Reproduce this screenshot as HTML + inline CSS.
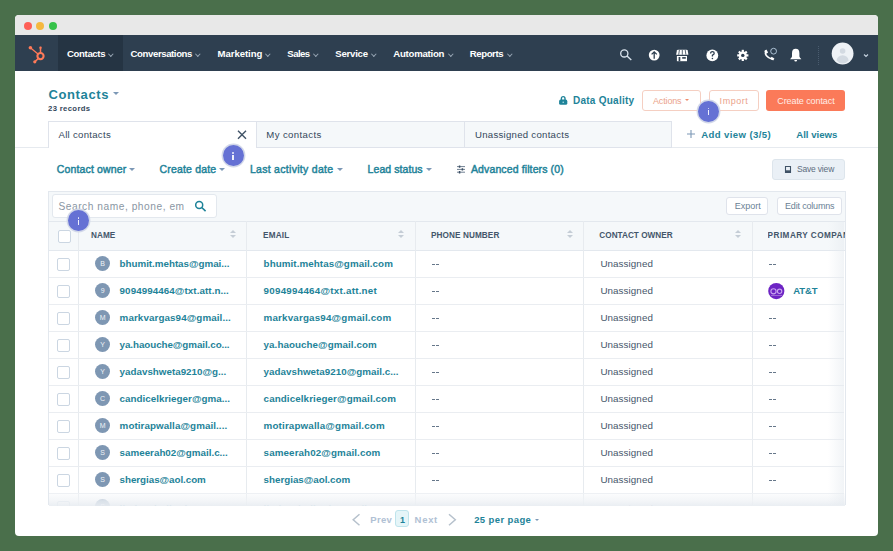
<!DOCTYPE html>
<html><head><meta charset="utf-8">
<style>
*{box-sizing:border-box;margin:0;padding:0}
html,body{width:893px;height:551px;overflow:hidden;background:#4a6f4b;font-family:"Liberation Sans",sans-serif;position:relative}
.a{position:absolute}
.t{position:absolute;white-space:nowrap;line-height:1}
.dot{position:absolute;top:21.8px;width:8px;height:8px;border-radius:50%}
.car{position:absolute;width:3.6px;height:3.6px;border-right:1px solid #95a3b2;border-bottom:1px solid #95a3b2;transform:rotate(45deg)}
.tri{position:absolute;width:0;height:0;border-left:3px solid transparent;border-right:3px solid transparent;border-top:3px solid #7c98b6}
.vl{position:absolute;width:1px;background:#e7ebef}
.hl{position:absolute;height:1px;background:#eaedf1}
.cb{position:absolute;width:13px;height:13px;border:1px solid #cbd6e2;border-radius:2px;background:#fff}
.av{position:absolute;width:15.6px;height:15.6px;border-radius:50%;background:#7e97b3;color:#eef2f6;font-size:7px;line-height:15.6px;text-align:center;font-weight:normal}
.dash{position:absolute;width:7px;height:6px}
.dash:before,.dash:after{content:"";position:absolute;top:2.5px;width:3px;height:1px;background:#66778a}
.dash:before{left:0}.dash:after{left:4px}
.badge{position:absolute;width:21px;height:21px;border-radius:50%;background:#6571d4;box-shadow:0 0 0 1.4px rgba(208,214,232,.95)}
.badge:before{content:"";position:absolute;left:9.75px;top:7.1px;width:1.6px;height:1.6px;background:#eef0fb;border-radius:1px}
.badge:after{content:"";position:absolute;left:9.8px;top:9.7px;width:1.5px;height:4.9px;background:#eef0fb}
.sort{position:absolute;width:7px;height:12px}
.sort:before{content:"";position:absolute;left:1px;top:0px;border-left:3px solid transparent;border-right:3px solid transparent;border-bottom:3px solid #c5cdd6}
.sort:after{content:"";position:absolute;left:1px;top:5px;border-left:3px solid transparent;border-right:3px solid transparent;border-top:3.5px solid #c5cdd6}
.btn{position:absolute;background:#fff;border:1px solid #dfe3eb;border-radius:3px}
</style></head>
<body>
<!-- window -->
<div class="a" style="left:15px;top:15px;width:863px;height:521px;background:#fff;border-radius:4px"></div>
<div class="a" style="left:15px;top:15px;width:863px;height:20px;background:#e8e8e8;border-radius:4px 4px 0 0"></div>
<div class="dot" style="left:24px;background:#fe5f57"></div>
<div class="dot" style="left:36.2px;background:#f5b83f"></div>
<div class="dot" style="left:48.8px;background:#36c24a"></div>

<!-- NAV -->
<div class="a" style="left:15px;top:35px;width:863px;height:36px;background:#2e3f50"></div>
<div class="a" style="left:58px;top:35px;width:64.5px;height:36px;background:#253443"></div>
<svg class="a" style="left:15px;top:35px" width="50" height="36" viewBox="0 0 50 36">
  <g fill="none" stroke="#ff7a59">
    <circle cx="25.5" cy="21.1" r="3.1" stroke-width="2.1"/>
    <line x1="25.5" y1="18" x2="25.5" y2="12.8" stroke-width="1.5"/>
    <line x1="23.3" y1="19.2" x2="15.4" y2="12.8" stroke-width="1.3"/>
    <line x1="23.4" y1="23.4" x2="19.8" y2="26.8" stroke-width="1.5"/>
  </g>
  <rect x="24.3" y="11.6" width="2.4" height="2.2" rx="0.8" fill="#ff7a59"/>
  <circle cx="15.4" cy="12.8" r="1.8" fill="#ff7a59"/>
  <circle cx="19.8" cy="26.8" r="1.6" fill="#ff7a59"/>
</svg>
<div class="car" style="left:108.7px;top:52px"></div>
<div class="car" style="left:196.2px;top:52px"></div>
<div class="car" style="left:265.9px;top:52px"></div>
<div class="car" style="left:313.9px;top:52px"></div>
<div class="car" style="left:372.2px;top:52px"></div>
<div class="car" style="left:449.2px;top:52px"></div>
<div class="car" style="left:508.2px;top:52px"></div>
<!-- nav icons -->
<svg class="a" style="left:610px;top:40px" width="220" height="28" viewBox="0 0 220 28">
  <!-- search -->
  <circle cx="14.3" cy="13.4" r="3.6" fill="none" stroke="#dbe4ee" stroke-width="1.3"/>
  <line x1="17" y1="16.1" x2="21.3" y2="20" stroke="#dbe4ee" stroke-width="1.4"/>
  <!-- upload -->
  <circle cx="44.2" cy="15.1" r="5.4" fill="#fff"/>
  <path d="M44.2 18.8 V12 M41.6 14.4 L44.2 11.8 L46.8 14.4" fill="none" stroke="#2e3f50" stroke-width="1.3"/>
  <!-- marketplace -->
  <path d="M66.9 10.6 Q67.1 9.8 68 9.8 H76.6 Q77.5 9.8 77.7 10.6 L78.4 14.8 H66.1 Z" fill="#fff"/>
  <path d="M69.4 10 L68.7 14.7 M72.3 10 V14.7 M75.2 10 L75.9 14.7" stroke="#2e3f50" stroke-width="0.8"/>
  <rect x="66.9" y="16" width="10.1" height="5.2" fill="#fff"/>
  <rect x="68.6" y="17" width="1.7" height="4.2" fill="#2e3f50"/>
  <rect x="72.2" y="17.1" width="3.6" height="1.6" fill="#2e3f50"/>
  <!-- help -->
  <circle cx="102.3" cy="15.4" r="5.9" fill="#fff"/>
  <path d="M100.6 13.6 Q100.6 11.6 102.4 11.6 Q104.2 11.6 104.2 13.3 Q104.2 14.5 102.4 15.2 V16.5" fill="none" stroke="#2e3f50" stroke-width="1.3"/>
  <circle cx="102.4" cy="18.5" r="0.8" fill="#2e3f50"/>
  <!-- gear -->
  <g transform="translate(132.8 15.4)">
    <circle r="3.9" fill="#fff"/>
    <g fill="#fff">
      <rect x="-1.1" y="-5.6" width="2.2" height="11.2"/>
      <rect x="-1.1" y="-5.6" width="2.2" height="11.2" transform="rotate(45)"/>
      <rect x="-1.1" y="-5.6" width="2.2" height="11.2" transform="rotate(90)"/>
      <rect x="-1.1" y="-5.6" width="2.2" height="11.2" transform="rotate(135)"/>
    </g>
    <circle r="1.7" fill="#2e3f50"/>
  </g>
  <!-- phone -->
  <path d="M155.6 11.2 Q154.2 16.6 162.4 19.2" fill="none" stroke="#fff" stroke-width="1.7" stroke-linecap="round"/>
  <path d="M154.3 10.9 L156.4 9.6 L158.1 12.6 L156.3 13.8 Z" fill="#fff"/>
  <path d="M160.3 18.6 L161.6 16.8 L164.4 18.6 L163.2 20.6 Z" fill="#fff"/>
  <circle cx="163.6" cy="11.2" r="2.9" fill="none" stroke="#b8cde0" stroke-width="0.9"/>
  <!-- bell -->
  <path d="M185.7 8.8 Q182 8.8 182 13.2 V16.6 Q181.6 18 180.2 19 V19.3 H191.2 V19 Q189.8 18 189.4 16.6 V13.2 Q189.4 8.8 185.7 8.8 Z" fill="#fff"/>
  <path d="M184.3 20 H187.1 Q187.1 21.5 185.7 21.5 Q184.3 21.5 184.3 20 Z" fill="#fff"/>
  <!-- divider -->
  <line x1="208.5" y1="6" x2="208.5" y2="25" stroke="#4a5c6f" stroke-width="1" stroke-dasharray="1 1"/>
</svg>
<svg class="a" style="left:826px;top:38px" width="50" height="32" viewBox="0 0 50 32">
  <circle cx="16.6" cy="15.5" r="10.9" fill="#eef2f6"/>
  <circle cx="16.6" cy="13" r="2.8" fill="#d3dae2"/>
  <path d="M10.5 22.5 Q11.5 17.5 16.6 17.3 Q21.7 17.5 22.7 22.5 Q20 25.5 16.6 25.6 Q13.2 25.5 10.5 22.5 Z" fill="#d3dae2"/>
  <path d="M38 16.5 L40 18.4 L42 16.5" fill="none" stroke="#c5d2df" stroke-width="1.1"/>
</svg>

<!-- HEADER -->
<div class="tri" style="left:112.6px;top:91.6px;border-left-width:3.8px;border-right-width:3.8px;border-top-width:3.7px"></div>
<svg class="a" style="left:558px;top:95px" width="11" height="11" viewBox="0 0 11 11">
  <path d="M3.4 5 V3.4 Q3.4 1.6 5.2 1.6 Q7 1.6 7 3.4 V5" fill="none" stroke="#1e8399" stroke-width="1.4"/>
  <rect x="1.1" y="4.6" width="8.2" height="5.2" rx="1.6" fill="#1e8399"/>
  <circle cx="5.2" cy="7.2" r="0.75" fill="#bfe6ee"/>
</svg>
<div class="btn" style="left:642px;top:90px;width:59px;height:21px;border-color:#f5cfc2"></div>
<div class="tri" style="left:684.8px;top:99.2px;border-top-color:#ef8c6c;border-left-width:2.2px;border-right-width:2.2px;border-top-width:2.6px"></div>
<div class="btn" style="left:709px;top:90px;width:49.5px;height:21px;border-color:#f5cfc2"></div>
<div class="a" style="left:766.2px;top:90px;width:78.8px;height:20.6px;background:#fb7a59;border-radius:3px"></div>

<!-- TABS -->
<div class="hl" style="left:15px;top:147px;width:863px;background:#e6eaef"></div>
<div class="a" style="left:48px;top:121px;width:208.5px;height:27px;background:#fff;border:1px solid #dfe3eb;border-bottom:none"></div>
<div class="a" style="left:256px;top:121px;width:416px;height:27px;background:#f5f8fa;border:1px solid #dfe3eb"></div>
<div class="vl" style="left:464px;top:121px;height:27px;background:#dfe3eb"></div>
<svg class="a" style="left:236px;top:129px" width="12" height="12" viewBox="0 0 12 12">
  <path d="M2 1.8 L10 9.8 M10 1.8 L2 9.8" stroke="#3f5266" stroke-width="1.4"/>
</svg>
<svg class="a" style="left:686px;top:129px" width="10" height="10" viewBox="0 0 10 10">
  <path d="M5 1 V9 M1 5 H9" stroke="#7c98b6" stroke-width="1.1"/>
</svg>

<!-- FILTERS -->
<div class="tri" style="left:129px;top:167.8px"></div>
<div class="tri" style="left:218.6px;top:167.8px"></div>
<div class="tri" style="left:336.6px;top:167.8px"></div>
<div class="tri" style="left:426px;top:167.8px"></div>
<svg class="a" style="left:456px;top:164px" width="10" height="10" viewBox="0 0 10 10">
  <path d="M1 2.6 H9 M1 5.4 H9 M1 8.2 H9" stroke="#5d7085" stroke-width="0.9"/>
  <path d="M3.6 1.4 V3.8 M6.4 4.2 V6.6 M3.6 7 V9.4" stroke="#3d5065" stroke-width="1.5"/>
</svg>
<div class="a" style="left:772px;top:159px;width:73.2px;height:21px;background:#eaf0f6;border:1px solid #dde5ec;border-radius:3px"></div>
<svg class="a" style="left:784px;top:165px" width="8" height="8" viewBox="0 0 8 8">
  <path d="M1.5 1.5 H6.5 V7.4 H1.5 Z" fill="none" stroke="#3f5266" stroke-width="1.1"/>
  <rect x="1.2" y="5.3" width="5.6" height="1.8" fill="#3f5266"/>
</svg>

<!-- TABLE -->
<div class="a" style="left:48px;top:191px;width:798px;height:314px;border:1px solid #e3e8ee;border-bottom:none;background:#fff"></div>
<div class="a" style="left:49px;top:192px;width:796px;height:29px;background:#f5f8fa"></div>
<div class="btn" style="left:51.6px;top:193.5px;width:165px;height:24.5px;border-color:#e3e8ee"></div>
<svg class="a" style="left:193px;top:199px" width="14" height="14" viewBox="0 0 14 14">
  <circle cx="6.2" cy="5.9" r="3.5" fill="none" stroke="#1e8399" stroke-width="1.5"/>
  <line x1="8.7" y1="8.5" x2="12.6" y2="12.2" stroke="#1e8399" stroke-width="1.6"/>
</svg>
<div class="btn" style="left:725.6px;top:197.4px;width:42.7px;height:17.2px"></div>
<div class="btn" style="left:776.7px;top:197.4px;width:65.5px;height:17.2px"></div>
<div class="a" style="left:49px;top:221px;width:796px;height:30px;background:#f5f8fa;border-top:1px solid #e3e8ee;border-bottom:1px solid #e3e8ee"></div>
<div class="cb" style="left:57.5px;top:229.5px"></div>
<div class="vl" style="left:78px;top:221px;height:284px"></div>
<div class="vl" style="left:246.3px;top:221px;height:284px"></div>
<div class="vl" style="left:415.3px;top:221px;height:284px"></div>
<div class="vl" style="left:583px;top:221px;height:284px"></div>
<div class="vl" style="left:751.8px;top:221px;height:284px"></div>
<div class="sort" style="left:228.6px;top:230.4px"></div>
<div class="sort" style="left:397.1px;top:230.4px"></div>
<div class="sort" style="left:565.5px;top:230.4px"></div>
<div class="sort" style="left:733.9px;top:230.4px"></div>
<div class="hl" style="left:49px;top:276.5px;width:795px"></div>
<div class="cb" style="left:57.3px;top:258px"></div>
<div class="av" style="left:94.8px;top:255.7px">B</div>
<div class="dash" style="left:431.8px;top:261.3px"></div>
<div class="dash" style="left:769px;top:261.3px"></div>
<div class="hl" style="left:49px;top:303.5px;width:795px"></div>
<div class="cb" style="left:57.3px;top:285px"></div>
<div class="av" style="left:94.8px;top:282.7px">9</div>
<div class="dash" style="left:431.8px;top:288.3px"></div>
<div class="hl" style="left:49px;top:330.5px;width:795px"></div>
<div class="cb" style="left:57.3px;top:312px"></div>
<div class="av" style="left:94.8px;top:309.7px">M</div>
<div class="dash" style="left:431.8px;top:315.3px"></div>
<div class="dash" style="left:769px;top:315.3px"></div>
<div class="hl" style="left:49px;top:357.5px;width:795px"></div>
<div class="cb" style="left:57.3px;top:339px"></div>
<div class="av" style="left:94.8px;top:336.7px">Y</div>
<div class="dash" style="left:431.8px;top:342.3px"></div>
<div class="dash" style="left:769px;top:342.3px"></div>
<div class="hl" style="left:49px;top:384.5px;width:795px"></div>
<div class="cb" style="left:57.3px;top:366px"></div>
<div class="av" style="left:94.8px;top:363.7px">Y</div>
<div class="dash" style="left:431.8px;top:369.3px"></div>
<div class="dash" style="left:769px;top:369.3px"></div>
<div class="hl" style="left:49px;top:411.5px;width:795px"></div>
<div class="cb" style="left:57.3px;top:393px"></div>
<div class="av" style="left:94.8px;top:390.7px">C</div>
<div class="dash" style="left:431.8px;top:396.3px"></div>
<div class="dash" style="left:769px;top:396.3px"></div>
<div class="hl" style="left:49px;top:438.5px;width:795px"></div>
<div class="cb" style="left:57.3px;top:420px"></div>
<div class="av" style="left:94.8px;top:417.7px">M</div>
<div class="dash" style="left:431.8px;top:423.3px"></div>
<div class="dash" style="left:769px;top:423.3px"></div>
<div class="hl" style="left:49px;top:465.5px;width:795px"></div>
<div class="cb" style="left:57.3px;top:447px"></div>
<div class="av" style="left:94.8px;top:444.7px">S</div>
<div class="dash" style="left:431.8px;top:450.3px"></div>
<div class="dash" style="left:769px;top:450.3px"></div>
<div class="hl" style="left:49px;top:492.5px;width:795px"></div>
<div class="cb" style="left:57.3px;top:474px"></div>
<div class="av" style="left:94.8px;top:471.7px">S</div>
<div class="dash" style="left:431.8px;top:477.3px"></div>
<div class="dash" style="left:769px;top:477.3px"></div>
<div class="hl" style="left:49px;top:519.5px;width:795px"></div>
<div class="cb" style="left:57.3px;top:501px"></div>
<div class="av" style="left:94.8px;top:498.7px">S</div>
<div class="dash" style="left:431.8px;top:504.3px"></div>
<div class="dash" style="left:769px;top:504.3px"></div>
<div class="t" style="left:119.6px;top:503.80px;font-size:9.8px;font-weight:bold;color:#1e8399;letter-spacing:0.1px">lindseyhollard@gma...</div>
<div class="t" style="left:263.6px;top:503.80px;font-size:9.8px;font-weight:bold;color:#1e8399;letter-spacing:0.1px">lindseyhollard@gmail.com</div>
<div class="t" style="left:600.4px;top:504.10px;font-size:9.8px;color:#33475b;letter-spacing:0.08px">Unassigned</div>
<!-- AT&T logo -->
<svg class="a" style="left:767px;top:282px" width="19" height="19" viewBox="0 0 19 19">
  <circle cx="9.3" cy="9.1" r="8.1" fill="#6d24c4"/>
  <circle cx="6.5" cy="9.3" r="2.6" fill="none" stroke="#c9a4ef" stroke-width="1.1"/>
  <circle cx="12.6" cy="9.3" r="2.2" fill="none" stroke="#c9a4ef" stroke-width="1.1"/>
  <path d="M4 13.5 H15" stroke="#a77ad8" stroke-width="0.8"/>
</svg>
<!-- bottom fade -->
<div class="a" style="left:40px;top:505.5px;width:820px;height:30px;background:#fff"></div>
<div class="a" style="left:49px;top:493px;width:796px;height:12.5px;background:linear-gradient(rgba(246,248,250,0.3),rgba(240,243,246,.8) 60%,rgba(233,237,242,.95))"></div>
<div class="a" style="left:828px;top:221px;width:16px;height:284px;background:linear-gradient(90deg,rgba(236,240,244,0),rgba(230,235,240,.55))"></div>

<!-- PAGINATION -->
<svg class="a" style="left:350px;top:512px" width="12" height="15" viewBox="0 0 12 15">
  <path d="M9.5 2.3 L3.2 7.8 L9.5 13.3" fill="none" stroke="#b6c1cc" stroke-width="1.5"/>
</svg>
<div class="a" style="left:395.4px;top:510.3px;width:14.1px;height:16.7px;background:#e5f5f8;border:1px solid #bfe4ec;border-radius:3px"></div>
<svg class="a" style="left:446px;top:512px" width="12" height="15" viewBox="0 0 12 15">
  <path d="M3 2.3 L9.3 7.8 L3 13.3" fill="none" stroke="#b6c1cc" stroke-width="1.5"/>
</svg>
<div class="tri" style="left:534.8px;top:518.6px;border-top-color:#7c98b6;border-left-width:2.4px;border-right-width:2.4px;border-top-width:2.6px"></div>

<div class="t" id="nav0" style="left:67.00px;top:49.27px;font-size:9.6px;font-weight:bold;color:#ffffff;letter-spacing:-0.366px;">Contacts</div>
<div class="t" id="nav1" style="left:130.60px;top:49.27px;font-size:9.6px;font-weight:bold;color:#ffffff;letter-spacing:-0.405px;">Conversations</div>
<div class="t" id="nav2" style="left:217.60px;top:49.27px;font-size:9.6px;font-weight:bold;color:#ffffff;letter-spacing:-0.078px;">Marketing</div>
<div class="t" id="nav3" style="left:287.30px;top:49.27px;font-size:9.6px;font-weight:bold;color:#ffffff;letter-spacing:-0.570px;">Sales</div>
<div class="t" id="nav4" style="left:335.30px;top:49.27px;font-size:9.6px;font-weight:bold;color:#ffffff;letter-spacing:-0.243px;">Service</div>
<div class="t" id="nav5" style="left:393.20px;top:49.27px;font-size:9.6px;font-weight:bold;color:#ffffff;letter-spacing:-0.222px;">Automation</div>
<div class="t" id="nav6" style="left:469.70px;top:49.27px;font-size:9.6px;font-weight:bold;color:#ffffff;letter-spacing:-0.392px;">Reports</div>
<div class="t" id="hcon" style="left:48.40px;top:87.50px;font-size:13px;font-weight:bold;color:#1e8399;letter-spacing:0.639px;">Contacts</div>
<div class="t" id="hrec" style="left:48.00px;top:104.88px;font-size:7.7px;font-weight:bold;color:#33475b;letter-spacing:0.356px;">23 records</div>
<div class="t" id="dq" style="left:573.00px;top:96.13px;font-size:10px;font-weight:bold;color:#1e8399;letter-spacing:0.249px;">Data Quality</div>
<div class="t" id="act" style="left:653.00px;top:96.78px;font-size:9px;font-weight:normal;color:#eba38b;letter-spacing:-0.153px;">Actions</div>
<div class="t" id="imp" style="left:719.60px;top:96.78px;font-size:9px;font-weight:normal;color:#eba38b;letter-spacing:0.539px;">Import</div>
<div class="t" id="cre" style="left:777.30px;top:96.68px;font-size:9px;font-weight:normal;color:#ffece6;letter-spacing:-0.088px;">Create contact</div>
<div class="t" id="tab1" style="left:58.50px;top:129.97px;font-size:9.6px;font-weight:normal;color:#33475b;letter-spacing:0.285px;">All contacts</div>
<div class="t" id="tab2" style="left:266.30px;top:129.97px;font-size:9.6px;font-weight:normal;color:#33475b;letter-spacing:0.391px;">My contacts</div>
<div class="t" id="tab3" style="left:475.00px;top:129.97px;font-size:9.6px;font-weight:normal;color:#33475b;letter-spacing:0.274px;">Unassigned contacts</div>
<div class="t" id="addv" style="left:701.30px;top:130.07px;font-size:9.6px;font-weight:bold;color:#1e8399;letter-spacing:0.376px;">Add view (3/5)</div>
<div class="t" id="allv" style="left:796.20px;top:130.07px;font-size:9.6px;font-weight:bold;color:#1e8399;letter-spacing:0.017px;">All views</div>
<div class="t" id="f1" style="left:56.70px;top:163.91px;font-size:10.5px;font-weight:normal;color:#1e8399;letter-spacing:0.157px;-webkit-text-stroke:0.45px #1e8399;">Contact owner</div>
<div class="t" id="f2" style="left:159.60px;top:163.91px;font-size:10.5px;font-weight:normal;color:#1e8399;letter-spacing:0.162px;-webkit-text-stroke:0.45px #1e8399;">Create date</div>
<div class="t" id="f3" style="left:249.90px;top:163.91px;font-size:10.5px;font-weight:normal;color:#1e8399;letter-spacing:0.293px;-webkit-text-stroke:0.45px #1e8399;">Last activity date</div>
<div class="t" id="f4" style="left:367.60px;top:163.91px;font-size:10.5px;font-weight:normal;color:#1e8399;letter-spacing:0.071px;-webkit-text-stroke:0.45px #1e8399;">Lead status</div>
<div class="t" id="f5" style="left:471.00px;top:163.91px;font-size:10.5px;font-weight:normal;color:#1e8399;letter-spacing:0.117px;-webkit-text-stroke:0.45px #1e8399;">Advanced filters (0)</div>
<div class="t" id="sv" style="left:796.90px;top:165.10px;font-size:8.5px;font-weight:normal;color:#5d6d7e;letter-spacing:-0.169px;">Save view</div>
<div class="t" id="srch" style="left:58.40px;top:201.77px;font-size:10.2px;font-weight:normal;color:#8a96a3;letter-spacing:0.538px;">Search name, phone, em</div>
<div class="t" id="exp" style="left:734.70px;top:201.68px;font-size:9px;font-weight:normal;color:#6a7f95;letter-spacing:-0.005px;">Export</div>
<div class="t" id="edc" style="left:785.00px;top:201.68px;font-size:9px;font-weight:normal;color:#6a7f95;letter-spacing:-0.176px;">Edit columns</div>
<div class="t" id="c1" style="left:91.00px;top:232.46px;font-size:8.2px;font-weight:bold;color:#44566a;letter-spacing:0.027px;">NAME</div>
<div class="t" id="c2" style="left:263.00px;top:232.46px;font-size:8.2px;font-weight:bold;color:#44566a;letter-spacing:0.206px;">EMAIL</div>
<div class="t" id="c3" style="left:431.00px;top:232.46px;font-size:8.2px;font-weight:bold;color:#44566a;letter-spacing:0.088px;">PHONE NUMBER</div>
<div class="t" id="c4" style="left:599.30px;top:232.46px;font-size:8.2px;font-weight:bold;color:#44566a;letter-spacing:0.027px;">CONTACT OWNER</div>
<div class="t" id="c5" style="left:767.60px;top:232.46px;font-size:8.2px;font-weight:bold;color:#44566a;letter-spacing:0.455px;width:77px;overflow:hidden;">PRIMARY COMPANY</div>
<div class="t" id="rn0" style="left:119.60px;top:258.80px;font-size:9.8px;font-weight:bold;color:#1e8399;letter-spacing:-0.023px;">bhumit.mehtas@gmai...</div>
<div class="t" id="re0" style="left:263.60px;top:258.80px;font-size:9.8px;font-weight:bold;color:#1e8399;letter-spacing:0.073px;">bhumit.mehtas@gmail.com</div>
<div class="t" id="ru0" style="left:600.40px;top:259.10px;font-size:9.8px;font-weight:normal;color:#45566a;letter-spacing:0.084px;">Unassigned</div>
<div class="t" id="rn1" style="left:119.60px;top:285.80px;font-size:9.8px;font-weight:bold;color:#1e8399;letter-spacing:0.074px;">9094994464@txt.att.n...</div>
<div class="t" id="re1" style="left:263.60px;top:285.80px;font-size:9.8px;font-weight:bold;color:#1e8399;letter-spacing:0.241px;">9094994464@txt.att.net</div>
<div class="t" id="ru1" style="left:600.40px;top:286.10px;font-size:9.8px;font-weight:normal;color:#45566a;letter-spacing:0.084px;">Unassigned</div>
<div class="t" id="rn2" style="left:119.60px;top:312.80px;font-size:9.8px;font-weight:bold;color:#1e8399;letter-spacing:0.099px;">markvargas94@gmail...</div>
<div class="t" id="re2" style="left:263.60px;top:312.80px;font-size:9.8px;font-weight:bold;color:#1e8399;letter-spacing:0.175px;">markvargas94@gmail.com</div>
<div class="t" id="ru2" style="left:600.40px;top:313.10px;font-size:9.8px;font-weight:normal;color:#45566a;letter-spacing:0.084px;">Unassigned</div>
<div class="t" id="rn3" style="left:119.60px;top:339.80px;font-size:9.8px;font-weight:bold;color:#1e8399;letter-spacing:-0.065px;">ya.haouche@gmail.co...</div>
<div class="t" id="re3" style="left:263.60px;top:339.80px;font-size:9.8px;font-weight:bold;color:#1e8399;letter-spacing:0.062px;">ya.haouche@gmail.com</div>
<div class="t" id="ru3" style="left:600.40px;top:340.10px;font-size:9.8px;font-weight:normal;color:#45566a;letter-spacing:0.084px;">Unassigned</div>
<div class="t" id="rn4" style="left:119.60px;top:366.80px;font-size:9.8px;font-weight:bold;color:#1e8399;letter-spacing:0.006px;">yadavshweta9210@g...</div>
<div class="t" id="re4" style="left:263.60px;top:366.80px;font-size:9.8px;font-weight:bold;color:#1e8399;letter-spacing:0.021px;">yadavshweta9210@gmail.c...</div>
<div class="t" id="ru4" style="left:600.40px;top:367.10px;font-size:9.8px;font-weight:normal;color:#45566a;letter-spacing:0.084px;">Unassigned</div>
<div class="t" id="rn5" style="left:119.60px;top:393.80px;font-size:9.8px;font-weight:bold;color:#1e8399;letter-spacing:0.031px;">candicelkrieger@gma...</div>
<div class="t" id="re5" style="left:263.60px;top:393.80px;font-size:9.8px;font-weight:bold;color:#1e8399;letter-spacing:0.100px;">candicelkrieger@gmail.com</div>
<div class="t" id="ru5" style="left:600.40px;top:394.10px;font-size:9.8px;font-weight:normal;color:#45566a;letter-spacing:0.084px;">Unassigned</div>
<div class="t" id="rn6" style="left:119.60px;top:420.80px;font-size:9.8px;font-weight:bold;color:#1e8399;letter-spacing:0.080px;">motirapwalla@gmail....</div>
<div class="t" id="re6" style="left:263.60px;top:420.80px;font-size:9.8px;font-weight:bold;color:#1e8399;letter-spacing:0.152px;">motirapwalla@gmail.com</div>
<div class="t" id="ru6" style="left:600.40px;top:421.10px;font-size:9.8px;font-weight:normal;color:#45566a;letter-spacing:0.084px;">Unassigned</div>
<div class="t" id="rn7" style="left:119.60px;top:447.80px;font-size:9.8px;font-weight:bold;color:#1e8399;letter-spacing:0.003px;">sameerah02@gmail.c...</div>
<div class="t" id="re7" style="left:263.60px;top:447.80px;font-size:9.8px;font-weight:bold;color:#1e8399;letter-spacing:0.107px;">sameerah02@gmail.com</div>
<div class="t" id="ru7" style="left:600.40px;top:448.10px;font-size:9.8px;font-weight:normal;color:#45566a;letter-spacing:0.084px;">Unassigned</div>
<div class="t" id="rn8" style="left:119.60px;top:474.80px;font-size:9.8px;font-weight:bold;color:#1e8399;letter-spacing:-0.045px;">shergias@aol.com</div>
<div class="t" id="re8" style="left:263.60px;top:474.80px;font-size:9.8px;font-weight:bold;color:#1e8399;letter-spacing:-0.019px;">shergias@aol.com</div>
<div class="t" id="ru8" style="left:600.40px;top:475.10px;font-size:9.8px;font-weight:normal;color:#45566a;letter-spacing:0.084px;">Unassigned</div>
<div class="t" id="att" style="left:793.20px;top:286.36px;font-size:9.5px;font-weight:bold;color:#1e8399;letter-spacing:-0.112px;">AT&amp;T</div>
<div class="t" id="prev" style="left:370.30px;top:514.66px;font-size:9.5px;font-weight:bold;color:#b0c1d4;letter-spacing:0.297px;">Prev</div>
<div class="t" id="pg1" style="left:400.00px;top:515.68px;font-size:9px;font-weight:bold;color:#1e8399;">1</div>
<div class="t" id="next" style="left:414.60px;top:514.66px;font-size:9.5px;font-weight:bold;color:#b0c1d4;letter-spacing:0.699px;">Next</div>
<div class="t" id="ppg" style="left:474.20px;top:514.66px;font-size:9.5px;font-weight:bold;color:#1e8399;letter-spacing:0.389px;">25 per page</div>

<!-- badges -->
<div class="badge" style="left:698px;top:100.5px"></div>
<div class="badge" style="left:222.5px;top:145px"></div>
<div class="badge" style="left:68px;top:210.1px"></div>
</body></html>
